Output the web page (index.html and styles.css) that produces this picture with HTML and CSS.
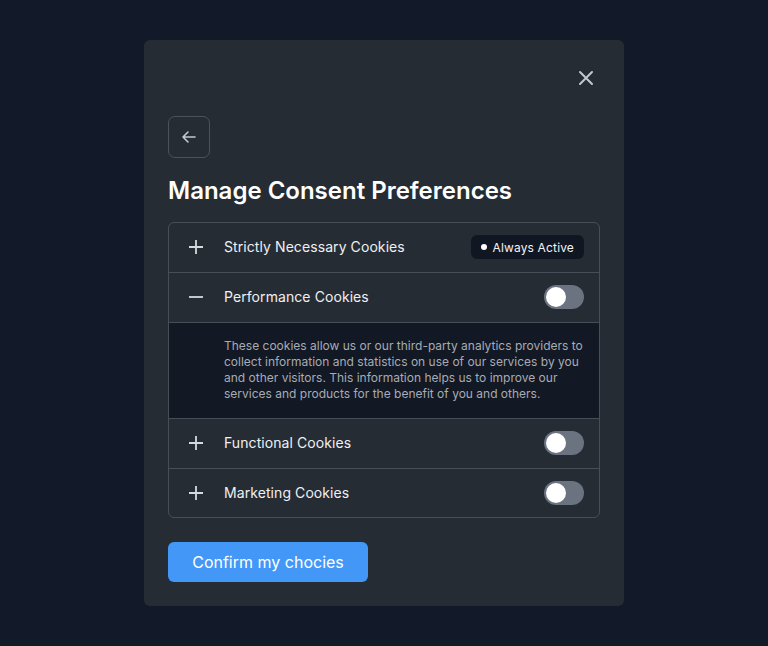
FILE: index.html
```html
<!DOCTYPE html>
<html lang="en">
<head>
<meta charset="utf-8">
<title>Manage Consent Preferences</title>
<link rel="stylesheet" href="styles.css">
</head>
<body>
<div class="modal">
  <div class="top">
    <button class="close" aria-label="Close">
      <svg width="16" height="16" viewBox="0 0 16 16" fill="none" stroke="currentColor" stroke-width="2" stroke-linecap="round"><path d="M2 2L14 14M14 2L2 14"/></svg>
    </button>
  </div>
  <button class="back" aria-label="Back">
    <svg width="18" height="18" viewBox="0 0 18 18" fill="none" stroke="currentColor" stroke-width="1.6" stroke-linecap="round" stroke-linejoin="round"><path d="M15 9H3M8 4L3 9L8 14"/></svg>
  </button>
  <h1 class="title">Manage Consent Preferences</h1>
  <div class="list">
    <div class="row">
      <span class="sign"><svg width="16" height="16" viewBox="0 0 16 16" stroke="currentColor" stroke-width="1.8"><path d="M8 1V15M1 8H15"/></svg></span>
      <span class="label">Strictly Necessary Cookies</span>
      <span class="badge"><span class="dot"></span>Always Active</span>
    </div>
    <div class="row">
      <span class="sign"><svg width="16" height="16" viewBox="0 0 16 16" stroke="currentColor" stroke-width="1.8"><path d="M1 8H15"/></svg></span>
      <span class="label">Performance Cookies</span>
      <span class="toggle"><span class="knob"></span></span>
    </div>
    <div class="desc">These cookies allow us or our third-party analytics providers to collect information and statistics on use of our services by you and other visitors. This information helps us to improve our services and products for the benefit of you and others.</div>
    <div class="row">
      <span class="sign"><svg width="16" height="16" viewBox="0 0 16 16" stroke="currentColor" stroke-width="1.8"><path d="M8 1V15M1 8H15"/></svg></span>
      <span class="label">Functional Cookies</span>
      <span class="toggle"><span class="knob"></span></span>
    </div>
    <div class="row last">
      <span class="sign"><svg width="16" height="16" viewBox="0 0 16 16" stroke="currentColor" stroke-width="1.8"><path d="M8 1V15M1 8H15"/></svg></span>
      <span class="label">Marketing Cookies</span>
      <span class="toggle"><span class="knob"></span></span>
    </div>
  </div>
  <button class="confirm">Confirm my chocies</button>
</div>
</body>
</html>
```
FILE: styles.css
```css
* { box-sizing: border-box; }
html, body { margin: 0; padding: 0; }
body {
  background: #121a2a;
  font-family: Inter, "Noto Sans", sans-serif;
  width: 768px;
  height: 646px;
  padding-top: 40px;
  color: #f3f4f6;
}
.modal {
  width: 480px;
  height: 566px;
  margin: 0 auto;
  background: #262c34;
  border-radius: 6px;
  padding: 24px;
  display: flex;
  flex-direction: column;
}
.top {
  display: flex;
  justify-content: flex-end;
  height: 28px;
  margin-top: 0;
  margin-bottom: 2px;
}
.close {
  background: none;
  border: 0;
  padding: 0;
  color: #c3c7ce;
  width: 28px;
  height: 28px;
  display: flex;
  align-items: center;
  justify-content: center;
  margin-right: 0;
}
.back {
  margin-top: 22px;
  width: 42px;
  height: 42px;
  border: 1px solid #4b525c;
  border-radius: 7px;
  background: transparent;
  color: #c3c7ce;
  display: flex;
  align-items: center;
  justify-content: center;
  padding: 0;
}
.title {
  margin: 18px 0 0;
  font-size: 24px;
  line-height: 30px;
  font-weight: 600;
  color: #ffffff;
  letter-spacing: 0;
}
.list {
  margin-top: 16px;
  border: 1px solid #474e57;
  border-radius: 6px;
  overflow: hidden;
}
.row {
  height: 50px;
  display: flex;
  align-items: center;
  padding: 0 15px 0 19px;
  border-bottom: 1px solid #474e57;
}
.row.last { border-bottom: 0; height: 49px; }
.sign {
  width: 16px;
  height: 16px;
  color: #d6d9de;
  display: flex;
  margin-right: 20px;
}
.label {
  flex: 1;
  font-size: 14px;
  font-weight: 400;
  letter-spacing: 0.08px;
  color: #eef0f3;
  margin-top: -1px;
}
.badge {
  display: flex;
  align-items: center;
  height: 24px;
  padding: 0 10px;
  background: #111722;
  border-radius: 6px;
  font-size: 12px;
  font-weight: 400;
  letter-spacing: 0.15px;
  color: #f3f4f6;
  gap: 6px;
}
.dot {
  width: 6px;
  height: 6px;
  border-radius: 50%;
  background: #ffffff;
}
.toggle {
  width: 40px;
  height: 24px;
  border-radius: 12px;
  background: #6b7280;
  padding: 2px;
  display: flex;
}
.knob {
  width: 20px;
  height: 20px;
  border-radius: 50%;
  background: #ffffff;
}
.desc {
  background: #121824;
  padding: 15px 16px 16px 55px;
  font-size: 12px;
  line-height: 16px;
  color: #a7acb4;
  border-bottom: 1px solid #474e57;
}
.confirm {
  margin-top: 24px;
  width: 200px;
  height: 40px;
  background: #4398f7;
  border: 0;
  border-radius: 6px;
  color: #ffffff;
  font-family: Inter, "Noto Sans", sans-serif;
  font-size: 16px;
  font-weight: 400;
  padding: 0;
}
```
